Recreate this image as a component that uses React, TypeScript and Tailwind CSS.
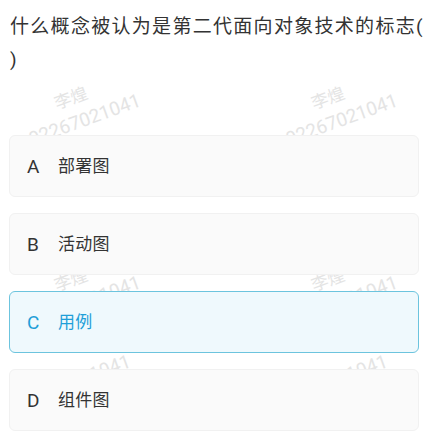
import React from "react";

type Option = { key: string; text: string; selected?: boolean };

const options: Option[] = [
  { key: "A", text: "部署图" },
  { key: "B", text: "活动图" },
  { key: "C", text: "用例", selected: true },
  { key: "D", text: "组件图" },
];

const font = { fontFamily: "Roboto, 'Noto Sans CJK SC', sans-serif" };

function Watermark({ dx, dy }: { dx: number; dy: number }) {
  return (
    <>
      <span
        className="absolute text-[17px] leading-none text-[#e4e4e4] -rotate-[20deg] whitespace-nowrap"
        style={{ left: 54 + dx, top: 90 + dy }}
      >
        李煌
      </span>
      <span
        className="absolute text-[19px] leading-none text-[#e4e4e4] -rotate-[20deg] whitespace-nowrap"
        style={{ left: 26 + dx, top: 110 + dy }}
      >
        02267021041
      </span>
    </>
  );
}

export default function App() {
  return (
    <div className="relative h-[432px] w-[444px] overflow-hidden bg-white" style={font}>
      <div className="pointer-events-none absolute inset-0 z-0">
        <Watermark dx={0} dy={0} />
        <Watermark dx={257} dy={0} />
        <Watermark dx={0} dy={182} />
        <Watermark dx={257} dy={182} />
        <span
          className="absolute text-[19px] leading-none text-[#e4e4e4] -rotate-[20deg] whitespace-nowrap"
          style={{ left: 16, top: 371 }}
        >
          02267021041
        </span>
        <span
          className="absolute text-[19px] leading-none text-[#e4e4e4] -rotate-[20deg] whitespace-nowrap"
          style={{ left: 273, top: 371 }}
        >
          02267021041
        </span>
      </div>

      <div className="relative z-10">
        <p className="px-[10px] pt-[10px] text-[19px] leading-[33px] tracking-[1.3px] text-[#333333]">
          什么概念被认为是第二代面向对象技术的标志(
          <br />)
        </p>

        <div className="mt-[59px] flex flex-col gap-[16px] pl-[9px]">
          {options.map((o) => (
            <div
              key={o.key}
              className={
                o.selected
                  ? "flex h-[62px] w-[410px] items-center rounded-[6px] border border-[#6cc4de] bg-[#eff9fd] pl-[17px] text-[#1f9fd8]"
                  : "flex h-[62px] w-[410px] items-center rounded-[6px] border border-[#f1f1f1] bg-[#fafafa] pl-[17px] text-[#333333]"
              }
            >
              <span className="w-[31px] text-[19px] leading-none">{o.key}</span>
              <span className="text-[17px] leading-none tracking-[0.3px]">{o.text}</span>
            </div>
          ))}
        </div>
      </div>
    </div>
  );
}
